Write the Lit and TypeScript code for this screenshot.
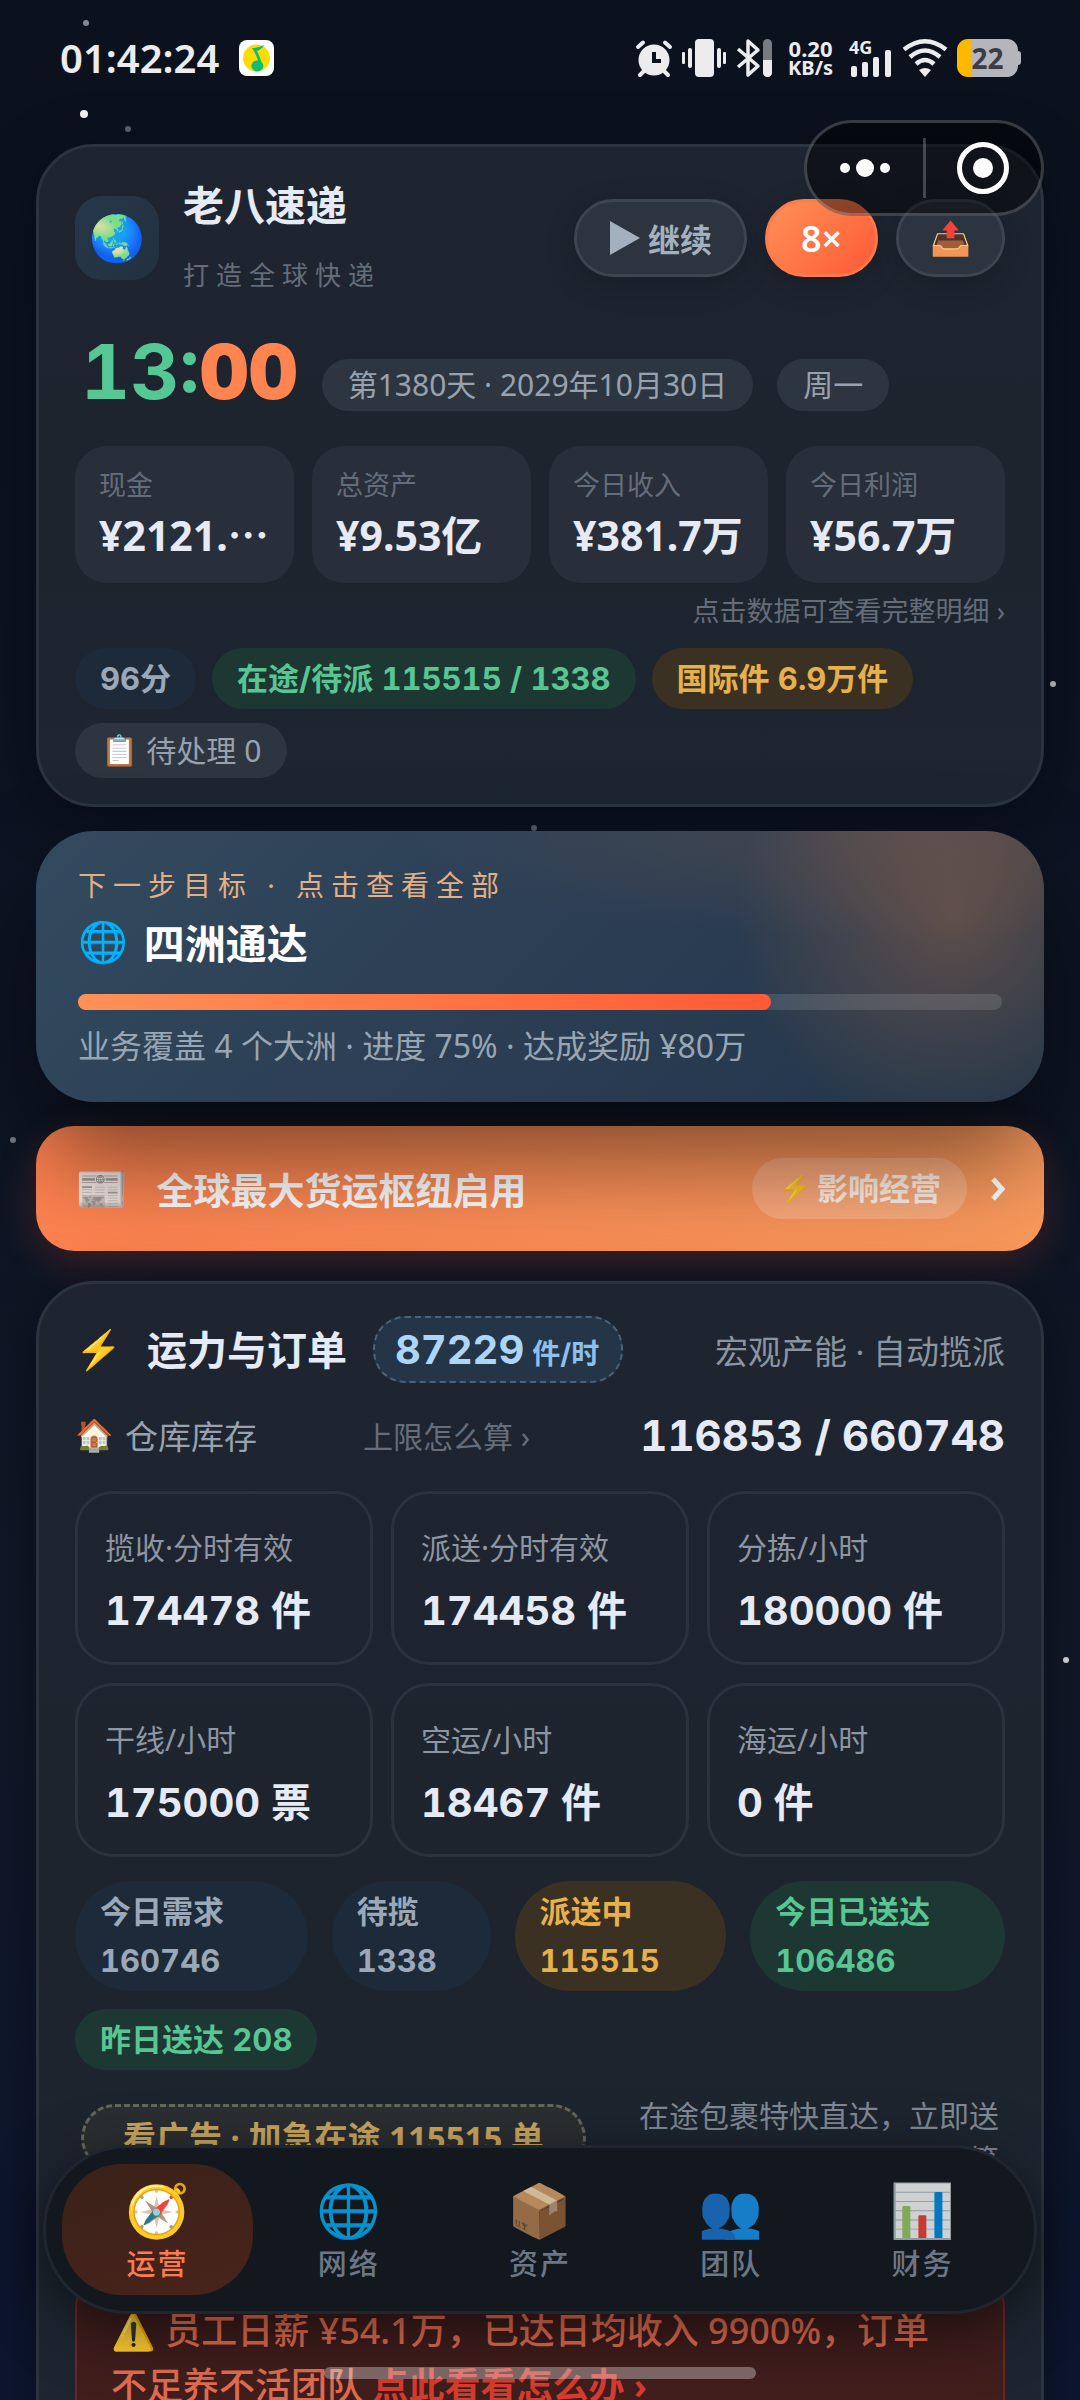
import { LitElement, html, css, svg } from "lit";
import { customElement, property, state } from "lit/decorators.js";
import { classMap } from "lit/directives/class-map.js";
import { styleMap } from "lit/directives/style-map.js";

const base = css`
  *, *::before, *::after { box-sizing: border-box; }
  h1, h2, p { margin: 0; }
  button { margin: 0; font: inherit; color: inherit; border: 0; background: none; padding: 0; text-align: inherit; }
  a { color: inherit; text-decoration: none; }
  .num { font-family: Inter, "Noto Sans CJK SC", sans-serif; font-variant-numeric: tabular-nums; }
`;

/* ---------- status bar ---------- */

@customElement("status-bar")
export class StatusBar extends LitElement {
  static styles = [base, css`
    :host { display: flex; align-items: center; justify-content: space-between; height: 60px; margin-top: 28px; padding: 0 62px 0 60px; color: #ececef; }
    .left { display: flex; align-items: center; gap: 20px; }
    .time { font: 600 40px/60px "Noto Sans", sans-serif; }
    .right { display: flex; align-items: center; gap: 10px; }
    .speed { font: 700 22px/20px "Noto Sans", sans-serif; text-align: center; padding: 0 6px 0 5px; }
    .speed small { display: block; font-size: 20px; }
    .battery { position: relative; display: flex; align-items: center; justify-content: center; width: 61px; height: 38px; border-radius: 11px; background: linear-gradient(90deg, #ffb800 14px, #b4b6bc 14px); color: #3c3d42; font: 700 28px/38px "Noto Sans", sans-serif; }
    .battery::after { content: ""; position: absolute; right: -3px; top: 12px; width: 4px; height: 14px; border-radius: 0 3px 3px 0; background: #b4b6bc; }
    svg { display: block; overflow: visible; }
  `];
  render() {
    return html`
      <div class="left">
        <span class="time">01:42:24</span>
        <svg width="35" height="36" viewBox="0 0 35 36">
          <rect width="35" height="36" rx="8" fill="#fff" />
          <circle cx="17.500" cy="18" r="13.500" fill="#fedc00" />
          <path d="M13 8 Q19 8 25 5 Q23 9 18 11 Q21 17 22.500 22 A6 5.500 0 1 1 19 20.500 Q17 14 13 8Z" fill="#0fbc73" />
        </svg>
      </div>
      <div class="right">
        <svg width="36" height="37" viewBox="0 0 36 37" fill="none" stroke="currentColor" stroke-width="4" stroke-linecap="round">
          <circle cx="18" cy="20" r="15.500" fill="currentColor" stroke="none" />
          <path d="M2 7 L7 2.500 M34 7 L29 2.500 M4 35 L8 31 M32 35 L28 31" />
          <path d="M18 12 V21 H25" stroke="#0b111d" stroke-linecap="butt" />
        </svg>
        <svg width="44" height="38" viewBox="0 0 44 38" fill="currentColor">
          <rect x="13" width="19" height="38" rx="4" /><rect x="6" y="9" width="4" height="20" rx="2" /><rect x="0" y="13" width="3" height="12" rx="1" />
          <rect x="35" y="9" width="4" height="20" rx="2" /><rect x="41" y="13" width="3" height="12" rx="1" />
        </svg>
        <svg width="37" height="38" viewBox="0 0 37 38" fill="none">
          <path d="M2 10 L22 27 L12 36 V2 L22 11 L2 28" stroke="currentColor" stroke-width="3.500" stroke-linejoin="round" />
          <rect x="27" y="0" width="9" height="38" rx="4.500" fill="#777b84" /><path d="M27 21 h9 v12.500 a4.500 4.500 0 0 1 -9 0z" fill="currentColor" />
        </svg>
        <div class="speed">0.20<small>KB/s</small></div>
        <svg width="44" height="38" viewBox="0 0 44 38" fill="currentColor">
          <text x="0" y="15" font-family="Noto Sans" font-weight="700" font-size="18">4G</text>
          <rect x="2" y="27" width="6" height="11" rx="2" /><rect x="13" y="23" width="6" height="15" rx="2" />
          <rect x="24" y="18" width="6" height="20" rx="2" /><rect x="36" y="11" width="6" height="27" rx="2" />
        </svg>
        <svg width="44" height="38" viewBox="0 0 44 38" fill="none" stroke="currentColor" stroke-width="4.500">
          <path d="M1 10.500 Q22 -6 43 10.500 M7 18 Q22 5 37 18 M13 25 Q22 17 31 25" /><path d="M16 31 Q22 27 28 31 L22 38Z" fill="currentColor" stroke="none" />
        </svg>
        <div class="battery">22</div>
      </div>`;
  }
}

/* ---------- mini-program capsule ---------- */

@customElement("window-capsule")
export class WindowCapsule extends LitElement {
  static styles = [base, css`
    :host { display: flex; align-items: center; width: 240px; height: 96px; border: 3px solid rgba(255, 255, 255, .2); border-radius: 48px; background: rgba(0, 0, 0, .45); box-sizing: border-box; }
    button { flex: 1; display: flex; justify-content: center; }
    button + button { border-left: 3px solid rgba(255, 255, 255, .22); height: 60px; align-items: center; }
  `];
  render() {
    return html`
      <button aria-label="更多"><svg width="50" height="18" viewBox="0 0 50 18" fill="#fff"><circle cx="5" cy="9" r="5" /><circle cx="25" cy="9" r="9" /><circle cx="45" cy="9" r="5" /></svg></button>
      <button aria-label="关闭"><svg width="52" height="52" viewBox="0 0 52 52" fill="none"><circle cx="26" cy="26" r="23.500" stroke="#fff" stroke-width="5" /><circle cx="26" cy="26" r="10" fill="#fff" /></svg></button>`;
  }
}

/* ---------- bottom navigation ---------- */

@customElement("bottom-nav")
export class BottomNav extends LitElement {
  @state() private current = 0;
  private tabs = [["🧭", "运营"], ["🌐", "网络"], ["📦", "资产"], ["👥", "团队"], ["📊", "财务"]];
  static styles = [base, css`
    :host { display: block; }
    nav { display: grid; grid-template-columns: repeat(5, 1fr); padding: 16px; border: 3px solid #20262e; border-radius: 84px; background: #13181f; box-shadow: 0 16px 60px rgba(0, 0, 0, .5); }
    button { display: flex; flex-direction: column; align-items: center; height: 131px; padding-top: 15px; border-radius: 60px; color: #6c7785; font: 500 29px/38px "Noto Sans", "Noto Sans CJK SC", sans-serif; letter-spacing: 2px; }
    .icon { font: 52px/66px "Noto Color Emoji", sans-serif; letter-spacing: 0; opacity: .8; }
    .active { background: linear-gradient(160deg, #3a2219, #48231b); color: #fa7c52; }
    .active .icon { opacity: 1; }
  `];
  render() {
    return html`<nav>${this.tabs.map(([icon, label], i) => html`
      <button class=${classMap({ active: i === this.current })} @click=${() => (this.current = i)}>
        <span class="icon">${icon}</span><span>${label}</span>
      </button>`)}</nav>`;
  }
}

/* ---------- metric tile ---------- */

@customElement("metric-tile")
export class MetricTile extends LitElement {
  @property() label = "";
  @property() value = "";
  static styles = [base, css`
    :host { display: block; box-sizing: border-box; min-width: 0; padding: 23px 27px 19px; border: 3px solid #2b323d; border-radius: 38px; }
    .label { font-size: 30px; line-height: 62px; color: #8d96a2; white-space: nowrap; }
    .value { font-size: 40px; line-height: 64px; font-weight: 700; color: #e5eaf4; white-space: nowrap; }
  `];
  render() {
    return html`<div class="label">${this.label}</div><div class="value num">${this.value}</div>`;
  }
}

/* ---------- page ---------- */

interface Star { x: number; y: number; r: number; o: number }

@customElement("app-root")
export class AppRoot extends LitElement {
  private goal = 75;
  private stars: Star[] = [
    { x: 86, y: 23, r: 3, o: .5 }, { x: 84, y: 114, r: 4, o: .95 }, { x: 128, y: 129, r: 3, o: .35 },
    { x: 1053, y: 684, r: 3, o: .75 }, { x: 534, y: 828, r: 3, o: .35 }, { x: 13, y: 1140, r: 3, o: .45 }, { x: 1066, y: 1660, r: 3, o: .85 },
  ];
  private money = [["现金", "¥2121."], ["总资产", "¥9.53亿"], ["今日收入", "¥381.7万"], ["今日利润", "¥56.7万"]];
  private capacity = [
    ["揽收·分时有效", "174478 件"], ["派送·分时有效", "174458 件"], ["分拣/小时", "180000 件"],
    ["干线/小时", "175000 票"], ["空运/小时", "18467 件"], ["海运/小时", "0 件"],
  ];
  private flow = [["今日需求", "160746", "blue"], ["待揽", "1338", "blue"], ["派送中", "115515", "gold"], ["今日已送达", "106486", "green"]];

  static styles = [base, css`
    :host { display: block; position: relative; height: 100vh; overflow: hidden; background: linear-gradient(180deg, #0b121e, #0c1322 30%, #101828 70%, #0d1730); font-family: "Noto Sans", "Noto Sans CJK SC", sans-serif; color: #e5eaf4; }
    .sky { position: absolute; inset: 0; width: 100%; height: 100%; }
    .scroll { position: relative; height: 100%; overflow: hidden auto; scrollbar-width: none; }
    main { display: flex; flex-direction: column; gap: 24px; padding: 56px 36px 0; }
    .capsule { position: absolute; top: 120px; right: 36px; }
    .nav { position: absolute; left: 43px; right: 43px; bottom: 86px; }
    .home { position: absolute; left: 30%; right: 30%; bottom: 21px; height: 12px; border-radius: 6px; background: rgba(255, 255, 255, .32); }
    .emoji { font-family: "Noto Color Emoji", sans-serif; font-weight: 400; }

    .card { padding: 0 36px; border: 3px solid #2b333e; border-radius: 58px; background: linear-gradient(180deg, #1e2530, #1d242e 60%, #1c2631); box-shadow: 0 12px 60px rgba(0, 0, 0, .4); }
    .row { display: flex; align-items: center; }

    .head { padding-top: 35px; gap: 18px; }
    .avatar { display: flex; align-items: center; justify-content: center; width: 84px; height: 84px; border-radius: 27px; background: linear-gradient(135deg, #27384b, #22313f); font-size: 45px; }
    .brand { flex: 1; padding-left: 6px; }
    h1 { font-size: 41px; line-height: 46px; font-weight: 700; }
    .slogan { margin-top: 28px; font-size: 26px; line-height: 38px; letter-spacing: 7px; color: #646d79; }
    .btn { display: flex; align-items: center; justify-content: center; gap: 8px; height: 78px; border: 3px solid #3d4550; border-radius: 39px; background: #2c343f; box-shadow: 0 8px 30px rgba(0, 0, 0, .2); font-size: 32px; font-weight: 700; color: #a3b0bf; }
    .play { padding: 0 32px 0 33px; }
    .speed { width: 113px; border-color: #ff7a4c; background: linear-gradient(135deg, #ff9157, #ff5a36); color: #fff; font: 600 36px "Noto Sans", sans-serif; }
    .export { width: 109px; font-size: 33px; }

    .clock-row { align-items: flex-end; gap: 24px; margin-top: 37px; padding-left: 6px; }
    .clock { font-size: 76px; line-height: 80px; font-weight: 700; color: #55c794; }
    .clock b { color: #ff8450; }
    .tag { padding: 0 26px; border-radius: 28px; background: #2d3540; font-size: 30px; line-height: 52px; color: #98a2ae; white-space: nowrap; }

    .money { display: grid; grid-template-columns: repeat(4, 1fr); gap: 18px; margin-top: 35px; }
    .cell { min-width: 0; padding: 20px 24px 17px; border-radius: 32px; background: #282e3a; }
    .cell .k { display: block; font-size: 27px; line-height: 38px; color: #646d79; }
    .cell .v { display: block; font: 700 41px/62px "Noto Sans", "Noto Sans CJK SC", sans-serif; white-space: nowrap; }
    .cell i { font-family: "Noto Sans CJK SC", sans-serif; font-style: normal; line-height: 1; }
    .hint { display: block; width: 100%; margin-top: 12px; font-size: 27px; line-height: 32px; text-align: right; color: #646d79; }
    .pills { display: flex; flex-wrap: wrap; gap: 14px 16px; margin-top: 21px; padding-bottom: 26px; }
    .pill { padding: 0 25px; border-radius: 56px; font-size: 31px; line-height: 61px; font-weight: 700; white-space: nowrap; }
    .blue { background: #1c2a39; color: #9aa8b8; }
    .green { background: #1d3732; color: #58c594; }
    .gold { background: #3a3122; color: #e6b04c; }
    .todo { display: flex; gap: 8px; line-height: 55px; font-size: 30px; }

    .goal { position: relative; z-index: 1; display: block; width: 100%; padding: 32px 42px; border-radius: 58px; background: radial-gradient(circle 220px at 91% 32%, rgba(255, 140, 66, .25), rgba(255, 140, 66, 0)), radial-gradient(ellipse 520px 110px at 88% 0, rgba(255, 140, 66, .13), rgba(255, 140, 66, 0)), linear-gradient(135deg, #324a5f, #2c3e53 50%, #213549); box-shadow: 0 58px 100px rgba(0, 0, 0, .5); }
    .goal .k { display: block; font-size: 28px; line-height: 44px; letter-spacing: 7px; color: #e3b083; }
    .goal .t { display: flex; align-items: center; gap: 16px; font-size: 41px; line-height: 72px; font-weight: 700; color: #fff; }
    .goal .t .emoji { font-size: 40px; }
    .track { display: block; height: 16px; margin: 15px 0 12px; border-radius: 8px; background: rgba(255, 255, 255, .12); }
    .fill { display: block; height: 100%; border-radius: 8px; background: linear-gradient(90deg, #ff9157, #ff5a36); }
    .goal .d { display: block; font-size: 32px; line-height: 48px; color: #98a6b4; }

    .news { display: flex; align-items: center; width: 100%; margin-bottom: 6px; padding: 32px 39px; border-radius: 38px; background: linear-gradient(100deg, #ff8250, #f99a5d); box-shadow: 0 12px 40px rgba(255, 90, 50, .2); color: #fff; font-size: 37px; font-weight: 700; }
    .news .emoji { font-size: 43px; opacity: .92; }
    .news .t { flex: 1; padding-left: 28px; }
    .badge { display: flex; gap: 4px; padding: 0 26px; border-radius: 31px; background: rgba(255, 255, 255, .2); font-size: 31px; line-height: 61px; color: #fff1e6; }
    .news .badge .emoji { font-size: 28px; }
    .news svg { margin-left: 24px; }

    .title { height: 99px; padding-top: 32px; }
    .title .emoji { width: 48px; font-size: 38px; text-align: center; }
    h2 { margin-left: 24px; font-size: 40px; line-height: 60px; font-weight: 700; }
    .rate { display: flex; align-items: baseline; margin-left: 26px; padding: 0 22px 0 20px; border: 2px dashed #47647e; border-radius: 32px; background: #243547; font-size: 40px; line-height: 63px; font-weight: 700; color: #acd5f7; }
    .rate small { margin-left: 8px; font-size: 28px; line-height: 40px; color: #8fc0ea; }
    .title p { margin-left: auto; font-size: 33px; color: #8b95a2; }
    .stock { margin-top: 22px; height: 60px; font-size: 33px; color: #98a2ae; }
    .stock .emoji { width: 50px; font-size: 31px; }
    .stock .how { margin-left: 106px; font-size: 30px; color: #656e7a; }
    .stock .num { margin-left: auto; font-size: 42px; font-weight: 700; color: #e5eaf4; }
    .tiles { display: grid; grid-template-columns: repeat(3, 1fr); gap: 18px; margin-top: 26px; }
    .flow { display: grid; grid-template-columns: 233fr 159fr 212fr 255fr; gap: 24px; margin: 24px 0 18px; }
    .flow .pill { padding: 6px 25px; line-height: 49px; }
    .flow .num { display: block; }
    .yesterday { width: fit-content; }
    .boost { justify-content: space-between; height: 88px; margin-top: 24px; padding: 0 6px; }
    .ad { padding: 0 39px; border: 3px dashed #66675a; border-radius: 36px; background: #2b2e30; font-size: 33px; line-height: 62px; font-weight: 700; color: #c9a65f; white-space: nowrap; }
    .boost p { width: 360px; font-size: 30px; line-height: 44px; text-align: right; color: #808995; }
    .alert { margin-top: 90px; padding: 30px 44px 60px 34px; border: 2px solid #702724; border-radius: 36px; background: linear-gradient(180deg, #3a1c1b, #45201e); font-size: 36px; line-height: 53px; font-weight: 500; color: #e06c50; }
    .alert .lead { display: block; white-space: nowrap; }
    .alert a { color: #d53b2f; font-weight: 700; text-decoration: underline; text-underline-offset: 8px; }
  `];

  render() {
    return html`
      <svg class="sky" aria-hidden="true">
        ${this.stars.map((s) => svg`<circle cx=${s.x} cy=${s.y} r=${s.r} fill="#fff" opacity=${s.o} />`)}
      </svg>
      <div class="scroll">
        <status-bar></status-bar>
        <main>
          <section class="card">
            <div class="row head">
              <div class="avatar emoji">🌏</div>
              <div class="brand"><h1>老八速递</h1><p class="slogan">打造全球快递</p></div>
              <button class="btn play"><svg width="30" height="34" viewBox="0 0 30 34"><path d="M0 0 L30 17 L0 34Z" fill="currentColor" /></svg>继续</button>
              <button class="btn speed">8×</button>
              <button class="btn export emoji" aria-label="导出">📤</button>
            </div>
            <div class="row clock-row">
              <div class="clock num">13:<b>00</b></div>
              <span class="tag">第1380天 · 2029年10月30日</span>
              <span class="tag">周一</span>
            </div>
            <div class="money">
              ${this.money.map(([k, v], i) => html`<button class="cell"><span class="k">${k}</span><span class="v">${v}${i === 0 ? html`<i>…</i>` : ""}</span></button>`)}
            </div>
            <button class="hint">点击数据可查看完整明细 ›</button>
            <div class="pills">
              <span class="pill blue num">96分</span>
              <span class="pill green num">在途/待派 115515 / 1338</span>
              <span class="pill gold num">国际件 6.9万件</span>
              <button class="tag todo"><span class="emoji">📋</span>待处理 0</button>
            </div>
          </section>

          <button class="goal">
            <span class="k">下一步目标 · 点击查看全部</span>
            <span class="t"><span class="emoji">🌐</span>四洲通达</span>
            <span class="track"><span class="fill" style=${styleMap({ width: `${this.goal}%` })}></span></span>
            <span class="d">业务覆盖 4 个大洲 · 进度 ${this.goal}% · 达成奖励 ¥80万</span>
          </button>

          <button class="news">
            <span class="emoji">📰</span><span class="t">全球最大货运枢纽启用</span>
            <span class="badge"><span class="emoji">⚡</span>影响经营</span>
            <svg width="14" height="24" viewBox="0 0 14 24" fill="none" stroke="#fff" stroke-width="5"><path d="M2 2 L11 12 L2 22" /></svg>
          </button>

          <section class="card">
            <div class="row title">
              <span class="emoji">⚡</span><h2>运力与订单</h2>
              <button class="rate num">87229<small>件/时</small></button>
              <p>宏观产能 · 自动揽派</p>
            </div>
            <div class="row stock">
              <span class="emoji">🏠</span><span>仓库库存</span>
              <a class="how" href="#capacity">上限怎么算 ›</a>
              <span class="num">116853 / 660748</span>
            </div>
            <div class="tiles">${this.capacity.map(([l, v]) => html`<metric-tile .label=${l} .value=${v}></metric-tile>`)}</div>
            <div class="flow">
              ${this.flow.map(([l, v, tone]) => html`<div class="pill ${tone}">${l}<span class="num">${v}</span></div>`)}
            </div>
            <div class="pill green num yesterday">昨日送达 208</div>
            <div class="row boost">
              <button class="ad">看广告 · 加急在途 115515 单</button>
              <p>在途包裹特快直达，立即送达并结算</p>
            </div>
            <p class="alert"><span class="lead"><span class="emoji">⚠️</span> 员工日薪 ¥54.1万，已达日均收入 9900%，订单</span>不足养不活团队 <a href="#payroll">点此看看怎么办 ›</a></p>
          </section>
        </main>
      </div>
      <window-capsule class="capsule"></window-capsule>
      <bottom-nav class="nav"></bottom-nav>
      <div class="home"></div>`;
  }
}
